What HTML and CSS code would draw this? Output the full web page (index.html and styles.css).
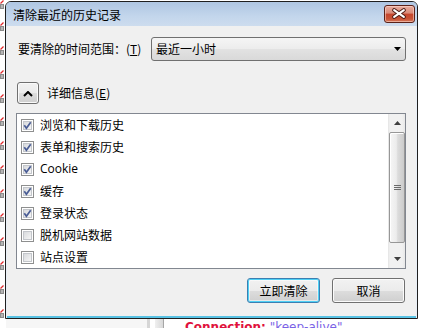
FILE: index.html
```html
<!DOCTYPE html>
<html lang="zh-CN">
<head>
<meta charset="utf-8">
<title>清除最近的历史记录</title>
<link rel="stylesheet" href="styles.css">
</head>
<body>
<svg class="defs" width="0" height="0" aria-hidden="true">
  <defs>
    <linearGradient id="cbg" x1="0" y1="0" x2="1" y2="1">
      <stop offset="0" stop-color="#d6d8db"/>
      <stop offset="1" stop-color="#f7f7f7"/>
    </linearGradient>
    <g id="gicon">
      <path d="M0.5 3.5 L3.5 0.5" stroke="#e0262a" stroke-width="1.3" fill="none"/>
      <rect x="0" y="4" width="4" height="5" fill="#8b8b8b"/>
      <rect x="1" y="5" width="2" height="3" fill="#b5b5b5"/>
    </g>
  </defs>
</svg>

<div class="desktop">
  <svg class="gutter" width="6" height="328" viewBox="0 0 6 328">
    <use href="#gicon" y="0"/>
    <use href="#gicon" y="22"/>
    <use href="#gicon" y="46"/>
    <use href="#gicon" y="70"/>
    <use href="#gicon" y="94"/>
    <use href="#gicon" y="117"/>
    <use href="#gicon" y="141"/>
    <use href="#gicon" y="165"/>
    <use href="#gicon" y="189"/>
    <use href="#gicon" y="213"/>
    <use href="#gicon" y="237"/>
    <use href="#gicon" y="261"/>
    <use href="#gicon" y="285"/>
    <use href="#gicon" y="309"/>
  </svg>
  <div class="editor">
    <div class="editor-body"></div>
    <div class="editor-foot">
      <div class="foot-pane"></div>
      <div class="foot-divider"></div>
      <div class="foot-gap"></div>
      <div class="foot-band"></div>
      <div class="foot-code"><span class="code-key">Connection:</span> <span class="code-val">"keep-alive"</span></div>
    </div>
  </div>
</div>

<div class="dialog">
  <div class="titlebar">
    <span class="title">清除最近的历史记录</span>
    <button class="close" aria-label="关闭">
      <svg width="31" height="18" viewBox="0 0 31 18">
        <path d="M10.5 5 L20.5 12 M20.5 5 L10.5 12" stroke="#4a1a12" stroke-width="4.2" stroke-linecap="round" fill="none"/>
        <path d="M10.5 5 L20.5 12 M20.5 5 L10.5 12" stroke="#ffffff" stroke-width="2.2" stroke-linecap="round" fill="none"/>
      </svg>
    </button>
  </div>
  <div class="client">
    <div class="range-row">
      <span class="range-label">要清除的时间范围：(<u>T</u>)</span>
      <div class="select">
        <span class="select-text">最近一小时</span>
        <svg class="select-arrow" width="7" height="4" viewBox="0 0 7 4"><path d="M0 0 H7 L3.5 4 Z" fill="#000"/></svg>
      </div>
    </div>
    <div class="details-row">
      <button class="toggle" aria-label="详细信息">
        <svg width="10" height="6" viewBox="0 0 10 6"><path d="M1 5 L5 1 L9 5" fill="none" stroke="#000" stroke-width="2"/></svg>
      </button>
      <span class="details-label">详细信息(<u>E</u>)</span>
    </div>
    <div class="list">
      <div class="items">
        <div class="item"><svg class="cb" width="13" height="13" viewBox="0 0 13 13"><rect x=".5" y=".5" width="12" height="12" fill="#fff" stroke="#8e8f8f"/><rect x="2.5" y="2.5" width="8" height="8" fill="url(#cbg)" stroke="#c3c6cb"/><path d="M3.3 6.3 L5.4 9.2 L9.7 3.3" fill="none" stroke="#4a5d95" stroke-width="1.7"/></svg><span>浏览和下载历史</span></div>
        <div class="item"><svg class="cb" width="13" height="13" viewBox="0 0 13 13"><rect x=".5" y=".5" width="12" height="12" fill="#fff" stroke="#8e8f8f"/><rect x="2.5" y="2.5" width="8" height="8" fill="url(#cbg)" stroke="#c3c6cb"/><path d="M3.3 6.3 L5.4 9.2 L9.7 3.3" fill="none" stroke="#4a5d95" stroke-width="1.7"/></svg><span>表单和搜索历史</span></div>
        <div class="item"><svg class="cb" width="13" height="13" viewBox="0 0 13 13"><rect x=".5" y=".5" width="12" height="12" fill="#fff" stroke="#8e8f8f"/><rect x="2.5" y="2.5" width="8" height="8" fill="url(#cbg)" stroke="#c3c6cb"/><path d="M3.3 6.3 L5.4 9.2 L9.7 3.3" fill="none" stroke="#4a5d95" stroke-width="1.7"/></svg><span class="latin">Cookie</span></div>
        <div class="item"><svg class="cb" width="13" height="13" viewBox="0 0 13 13"><rect x=".5" y=".5" width="12" height="12" fill="#fff" stroke="#8e8f8f"/><rect x="2.5" y="2.5" width="8" height="8" fill="url(#cbg)" stroke="#c3c6cb"/><path d="M3.3 6.3 L5.4 9.2 L9.7 3.3" fill="none" stroke="#4a5d95" stroke-width="1.7"/></svg><span>缓存</span></div>
        <div class="item"><svg class="cb" width="13" height="13" viewBox="0 0 13 13"><rect x=".5" y=".5" width="12" height="12" fill="#fff" stroke="#8e8f8f"/><rect x="2.5" y="2.5" width="8" height="8" fill="url(#cbg)" stroke="#c3c6cb"/><path d="M3.3 6.3 L5.4 9.2 L9.7 3.3" fill="none" stroke="#4a5d95" stroke-width="1.7"/></svg><span>登录状态</span></div>
        <div class="item"><svg class="cb" width="13" height="13" viewBox="0 0 13 13"><rect x=".5" y=".5" width="12" height="12" fill="#fff" stroke="#8e8f8f"/><rect x="2.5" y="2.5" width="8" height="8" fill="url(#cbg)" stroke="#c3c6cb"/></svg><span>脱机网站数据</span></div>
        <div class="item"><svg class="cb" width="13" height="13" viewBox="0 0 13 13"><rect x=".5" y=".5" width="12" height="12" fill="#fff" stroke="#8e8f8f"/><rect x="2.5" y="2.5" width="8" height="8" fill="url(#cbg)" stroke="#c3c6cb"/></svg><span>站点设置</span></div>
      </div>
      <div class="scrollbar">
        <div class="sb-btn"><svg width="7" height="4" viewBox="0 0 7 4"><path d="M0 4 H7 L3.5 0 Z" fill="#3f3f3f"/></svg></div>
        <div class="sb-track">
          <div class="sb-thumb">
            <svg width="7" height="5" viewBox="0 0 7 5"><path d="M0 0.5 H7 M0 2.5 H7 M0 4.5 H7" stroke="#6a6a6a" stroke-width="1"/></svg>
          </div>
        </div>
        <div class="sb-btn"><svg width="7" height="4" viewBox="0 0 7 4"><path d="M0 0 H7 L3.5 4 Z" fill="#3f3f3f"/></svg></div>
      </div>
    </div>
    <div class="buttons">
      <button class="btn default">立即清除</button>
      <button class="btn">取消</button>
    </div>
  </div>
</div>
</body>
</html>
```

FILE: styles.css
```css
* { box-sizing: border-box; }
html, body { margin: 0; padding: 0; }
body {
  width: 421px;
  height: 328px;
  overflow: hidden;
  position: relative;
  background: #ffffff;
  font-family: "Noto Sans CJK SC", "Noto Sans", sans-serif;
  font-size: 12px;
  color: #000;
}
.defs { position: absolute; width: 0; height: 0; }

/* background editor */
.desktop { display: flex; width: 421px; height: 328px; }
.gutter { flex: none; display: block; width: 6px; height: 328px; }
.editor { flex: 1; display: flex; flex-direction: column; }
.editor-body { flex: 1; }
.editor-foot { flex: none; height: 9px; display: flex; }
.foot-pane { width: 141px; background: #f6f6f6; }
.foot-divider { width: 3px; background: #d6d6d6; }
.foot-gap { width: 5px; }
.foot-band { width: 9px; background: linear-gradient(to right, #f0f0f0, #d8d8d8); border-right: 1px solid #a6a6a6; }
.foot-code {
  padding-left: 21px;
  font-family: "DejaVu Sans", sans-serif;
  font-size: 12px;
  line-height: 16px;
  white-space: nowrap;
}
.code-key { color: #e0123c; font-weight: bold; }
.code-val { color: #7a62e6; }

/* dialog window */
.dialog {
  position: absolute;
  left: 5px;
  top: 1px;
  width: 413px;
  height: 318px;
  border: 1px solid #1f1f1f;
  border-radius: 6px 6px 0 0;
  background: #e8eff7;
  padding: 0 1px;
  display: flex;
  flex-direction: column;
}
.titlebar {
  flex: none;
  height: 24px;
  margin: 0 -1px;
  padding-left: 7px;
  display: flex;
  justify-content: space-between;
  align-items: flex-start;
  background: linear-gradient(#afc6e2, #c3d6ec 60%, #cddcee);
  border-radius: 5px 5px 0 0;
}
.title { padding-top: 5px; line-height: 16px; font-size: 12px; }
.close {
  margin: 3px 2px 0 0;
  width: 31px;
  height: 18px;
  padding: 0;
  border: 1px solid #5b2219;
  border-radius: 3px;
  background: linear-gradient(#e8ad9f, #d98a78 45%, #c5452c 50%, #c85336 80%, #d67a5c);
  box-shadow: inset 0 0 0 1px rgba(255, 220, 210, 0.55);
  display: flex;
  align-items: center;
  justify-content: center;
}
.close svg { display: block; margin: -1px 0 0 -1px; }

.client {
  flex: 1;
  background: #f0f0f0;
  border-bottom: 2px solid #58c2e4;
  padding: 11px 10px 0 9px;
  display: flex;
  flex-direction: column;
}

.range-row { height: 24px; display: flex; align-items: center; }
.range-label { margin-left: 2px; line-height: 16px; white-space: nowrap; }
.range-label u, .details-label u { text-decoration: underline; text-underline-offset: 1px; }
.select {
  margin-left: auto;
  width: 255px;
  height: 24px;
  border: 1px solid #707070;
  border-radius: 3px;
  background: linear-gradient(#f5f5f5, #ececec 50%, #e2e2e2 51%, #d9d9d9);
  display: flex;
  align-items: center;
  padding-left: 4px;
}
.select-text { line-height: 16px; }
.select-arrow { margin-left: auto; margin-right: 4px; display: block; }

.details-row { margin-top: 21px; height: 22px; display: flex; align-items: center; }
.toggle {
  margin-left: 1px;
  width: 22px;
  height: 22px;
  padding: 0;
  border: 1px solid #707070;
  border-radius: 3px;
  background: linear-gradient(#f2f2f2, #ebebeb 50%, #dddddd 51%, #cfcfcf);
  box-shadow: inset 0 0 0 1px #fafafa;
  display: flex;
  align-items: center;
  justify-content: center;
}
.toggle svg { display: block; margin-top: 1px; }
.details-label { margin-left: 8px; line-height: 16px; }

.list {
  margin-top: 9px;
  height: 156px;
  border: 1px solid #828790;
  background: #fff;
  display: flex;
}
.items { flex: 1; padding-left: 4px; }
.item { height: 22px; display: flex; align-items: center; }
.item .cb { flex: none; display: block; margin-right: 6px; }
.item span { line-height: 16px; }
.item .latin { font-family: "Open Sans", "Noto Sans", sans-serif; font-size: 12px; }

.scrollbar {
  flex: none;
  width: 17px;
  display: flex;
  flex-direction: column;
  background: linear-gradient(to right, #e4e4e4, #f1f1f1 2px, #f1f1f1 14px, #e8e8e8);
}
.sb-btn { flex: none; height: 18px; display: flex; align-items: center; justify-content: center; }
.sb-btn svg { display: block; margin-left: 1px; }
.sb-track { flex: 1; padding: 0 0 0 1px; }
.sb-thumb {
  height: 111px;
  border: 1px solid #979797;
  border-radius: 2px;
  background: linear-gradient(to right, #f6f6f6, #ececec 45%, #dcdcdc 55%, #cbcbcb);
  box-shadow: inset 1px 1px 0 #ffffff;
  display: flex;
  align-items: center;
  justify-content: center;
}
.sb-thumb svg { display: block; }

.buttons { margin-top: 9px; display: flex; justify-content: flex-end; gap: 12px; padding-right: 1px; }
.btn {
  width: 73px;
  height: 25px;
  padding: 0;
  border: 1px solid #707070;
  border-radius: 3px;
  background: linear-gradient(#f2f2f2, #ebebeb 50%, #dddddd 51%, #cfcfcf);
  box-shadow: inset 0 0 0 1px #fbfbfb;
  font-family: "Noto Sans CJK SC", "Noto Sans", sans-serif;
  font-size: 12px;
  line-height: 16px;
  color: #000;
}
.btn.default {
  border-color: #3c7fb1;
  box-shadow: inset 0 0 0 1px #4fd0f5, inset 0 0 0 2px rgba(255, 255, 255, 0.5);
}
```
